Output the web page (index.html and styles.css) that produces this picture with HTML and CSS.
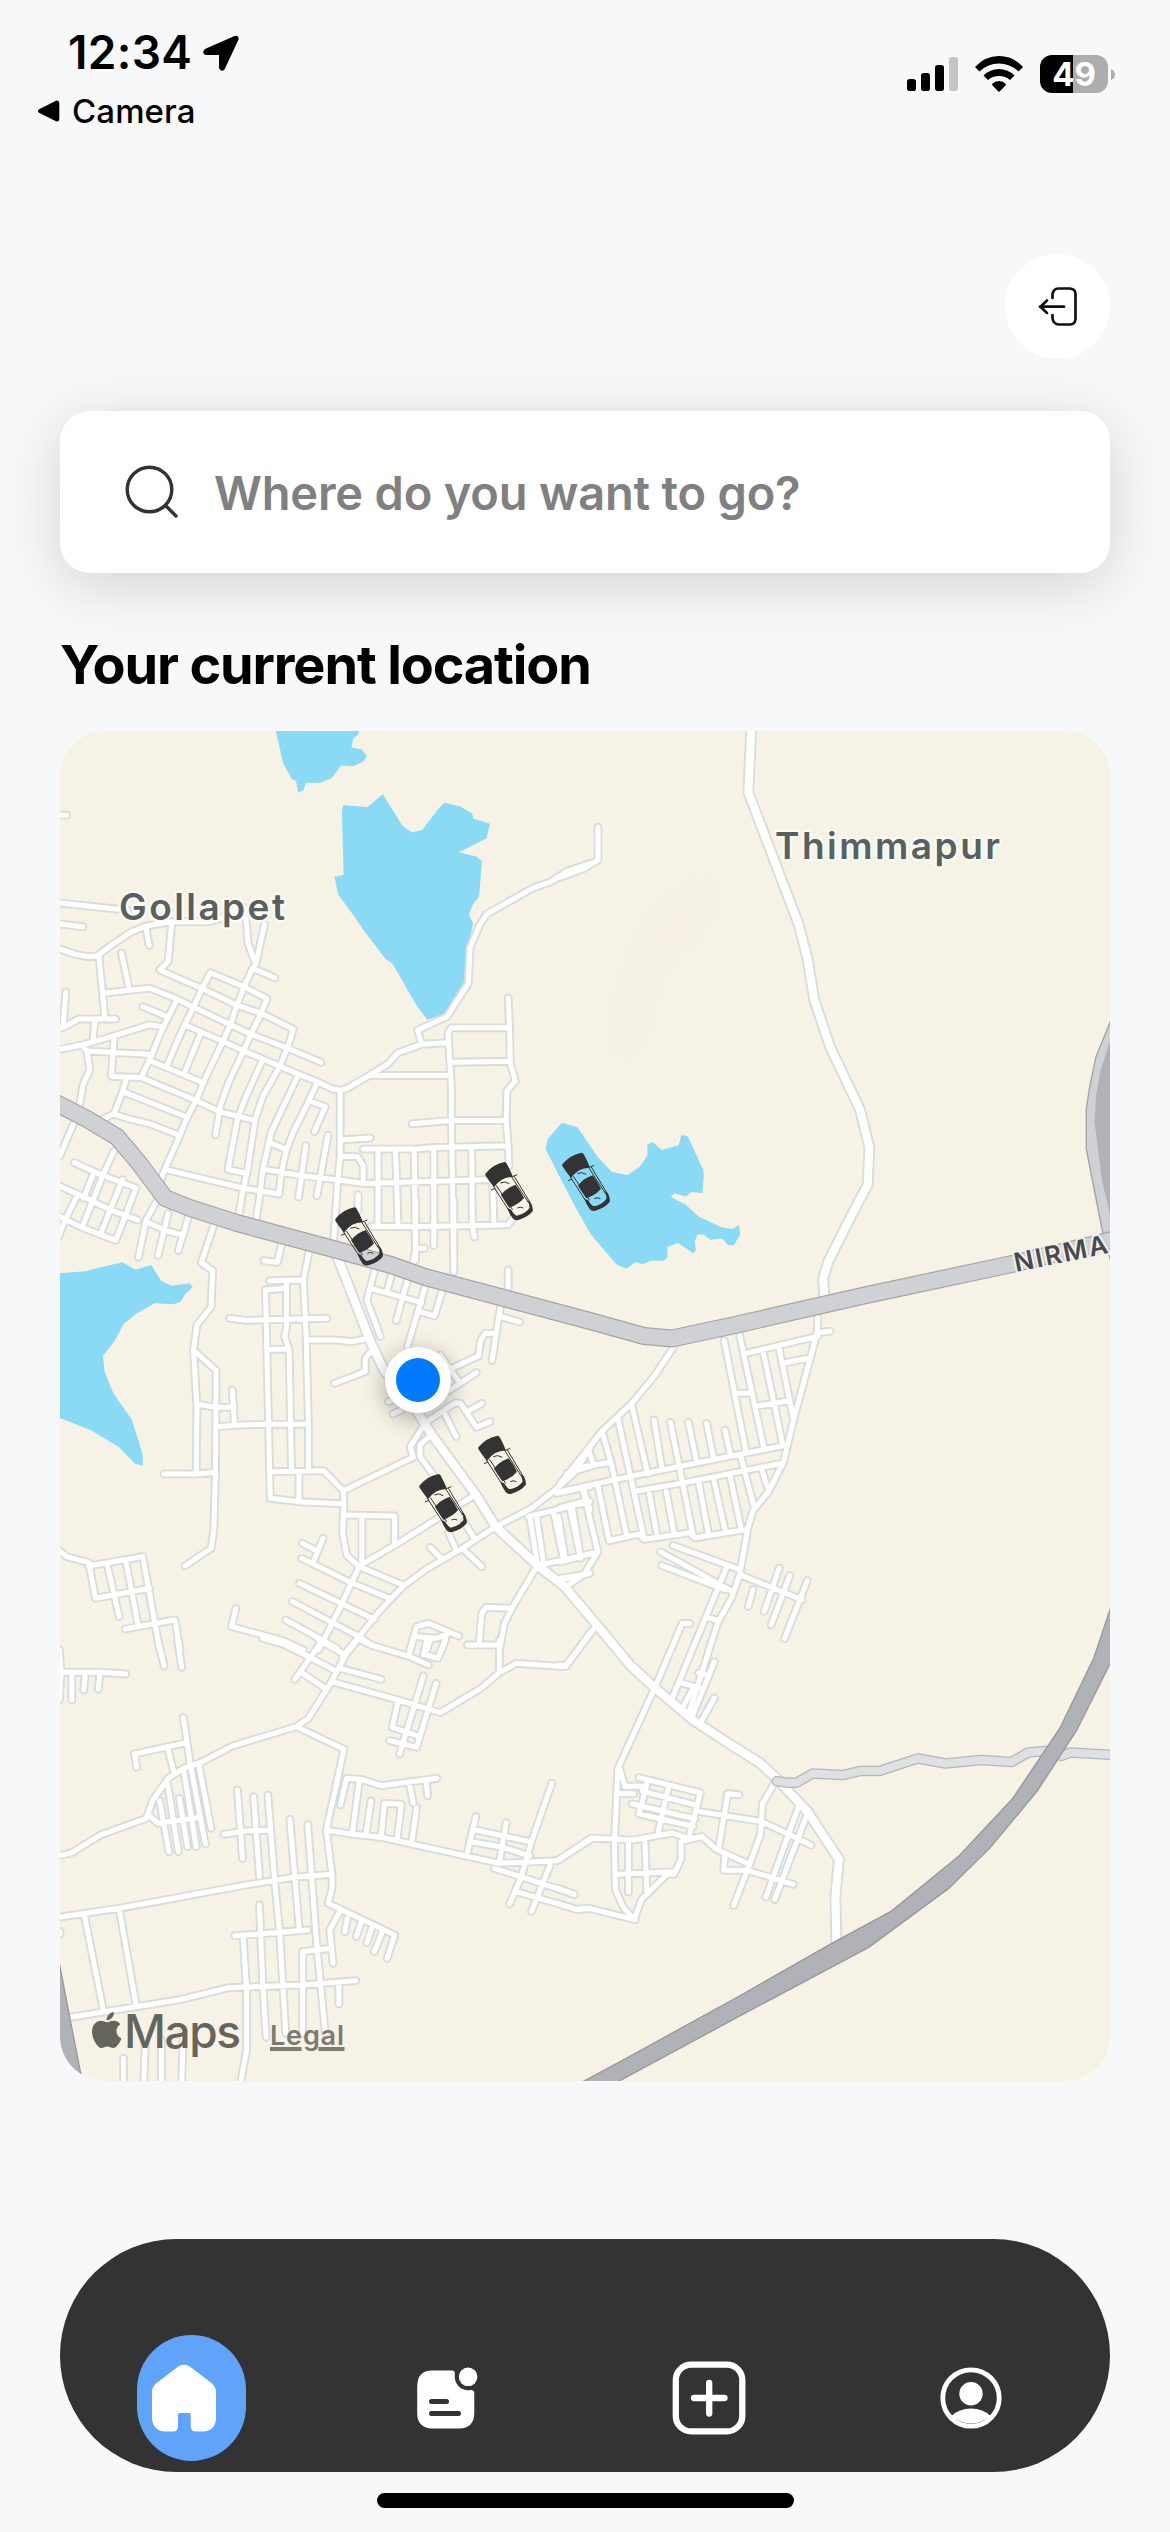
FILE: index.html
```html
<!DOCTYPE html>
<html lang="en">
<head>
<meta charset="utf-8">
<title>Your current location</title>
<link rel="stylesheet" href="styles.css">
</head>
<body>
<header class="status">
  <div class="status-left">
    <div class="clock"><span class="time">12:34</span>
      <svg class="loc" viewBox="0 0 36 36"><path d="M31 1.2Q36 -.5 35.500 4.500L22 33.500Q20.500 36.500 18 35.500Q16 35 16 32V20H3Q0 19.500 .3 17Q.2 15 3 13.500Z"/></svg>
    </div>
    <div class="back"><svg class="tri" viewBox="0 0 22 22"><path d="M1 9.200Q-1 11 1 12.800L18.500 21.500Q21 22 21.300 19V3Q21 0 18.500 .5Z"/></svg><span class="back-label">Camera</span></div>
  </div>
  <div class="status-right">
    <svg class="signal" viewBox="0 0 51 34"><rect y="22" width="9" height="12" rx="2.800"/><rect x="14" y="16" width="9" height="18" rx="2.800"/><rect x="28" y="8" width="9" height="26" rx="2.800"/><rect x="42" width="9" height="34" rx="2.800" fill="#c4c5c7"/></svg>
    <svg class="wifi" viewBox="0 0 48 36"><path d="M0 11Q10 0 24 0T48 11L43.500 15.500Q35 7.500 24 7.500T4.500 15.500ZM8.500 19.500Q15 13 24 13T39.500 19.500L35 24Q30.500 20 24 20T13 24ZM17 28Q20 25 24 25T31 28Q31 29 30 30L24 36 18 30Q17 29 17 28Z"/></svg>
    <div class="battery"><span class="level">49</span></div>
    <svg class="nub" viewBox="0 0 4 11"><path d="M0 0Q4 1.500 4 5.500T0 11Z" fill="#acadaf"/></svg>
  </div>
</header>
<main class="content">
  <div class="topbar">
    <button class="logout" aria-label="Log out"><svg viewBox="0 0 45 45"><path d="M17.500 14V11Q18 4.500 23.500 4.500H35Q40.500 5 40.500 10V35Q40 40.500 35 40.500H23.500Q18 40 17.500 34V31"/><path d="M29 22.700H5M12 16.500L5.500 22.700L12 28.900"/></svg></button>
  </div>
  <div class="search">
    <svg class="glass" viewBox="0 0 54 54"><circle cx="24.500" cy="24.500" r="22.300"/><path d="M40.500 40.500L51 51"/></svg>
    <span class="placeholder">Where do you want to go?</span>
  </div>
  <h1 class="title">Your current location</h1>
  <section class="map">
    <svg viewBox="60 731 1050 1350">
      <defs>
        <g id="streets">
          <path transform="translate(60 730) scale(.338)" d="M-5 252H20M0 512L200 533M0 574L68 582M0 648L50 665 88 671 110 668 150 638 210 598 255 580 330 567H440L475 558 520 530 545 525 552 575 556 630 578 690M605 575L580 690 565 715 545 760 525 810 505 870 480 925 430 1030 405 1090 370 1160 350 1210 310 1300 298 1330M570 705L635 733M255 590L264 638M330 575L320 685 295 710 420 765 525 815 595 838 690 885 675 935 650 995 600 1085 578 1150 555 1300 540 1370 530 1430M115 668L125 770 133 855M182 660L205 768M135 778L205 770 265 764 345 795 395 820 500 870 565 900 670 940 772 983M17 775L10 870M0 882L10 880 55 855H165M103 860L98 915M0 945L65 932 160 905 265 872 300 878M65 932L80 950 270 960M80 950L88 1005 68 1050 58 1110M160 910L152 1025 240 1028 400 1095 475 1130 575 1155M345 800L320 850 300 890 270 965 240 1028M245 818L320 850M270 980L415 1040M445 718L420 765 395 820 370 870 345 925 318 990M445 718L545 760 612 795 595 838 565 900 545 945 500 1040 475 1110 460 1198M375 875L480 920 545 950 650 995 705 1018 760 1040 808 1063 830 1066 850 1060 915 1022 970 988 1000 955 1070 930 1145 925M415 900L370 1010M600 975L550 1085 525 1150 497 1300 553 1312M705 1020L625 1190 600 1300 592 1370 580 1450M760 1045L735 1100 690 1190 670 1242 655 1310 648 1373M740 1098L785 1115 753 1188M625 1222L670 1242M727 1230L706 1382M793 1198L760 1378M310 1300L540 1355 648 1373M605 1300L710 1318 830 1332 900 1342 1110 1335 1280 1330M195 1035L185 1070 160 1135 130 1150M185 1070L375 1145M160 1137L210 1152 265 1165 350 1198M40 1165L0 1260M829 1066V1260L822 1330 810 1510M830 1213L918 1207M830 1262H880L897 1290V1340M915 1022H1145M1070 930L1058 888 1145 848 1208 750 1213 645 1240 580 1262 545 1400 467 1450 450 1500 418 1568 395M1326 793L1330 880 1332 985 1347 1038 1322 1068 1320 1155 1326 1230 1328 1290M1330 881H1158L1148 895 1158 1055V1155L1165 1570M1158 983L1332 980M1042 1165L1155 1155H1318M897 1240H1050L1110 1235 1326 1230M941 1245V1470M993 1245L1000 1470M1048 1245L1052 1568M1106 1240V1525M1218 1240L1220 1470 1226 1500M1280 1335L1284 1465M882 1375V1420M920 1468L1050 1470 1325 1464 1340 1445M42 1280L120 1315 225 1355M160 1245L130 1310 70 1460M100 1310L70 1385M0 1350L85 1388 145 1418 230 1450M225 1355L165 1510M185 1330L120 1490M0 1440L60 1470 165 1510M50 1380L15 1450 -5 1500M285 1395L255 1450 232 1560M255 1455L310 1480 365 1495M320 1430L290 1555M380 1440L350 1540"/>
          <path transform="translate(60 1200) scale(.338 .3333)" d="M455 75L418 188 452 212 447 320 405 375 395 450 405 620 403 818M395 450L462 512 460 810 455 990 447 1045 370 1098M308 822H400L460 817M405 612L460 622H515M510 570L516 672M460 680L550 674 735 672M655 135L643 187 603 182M738 150L720 240 620 242M610 270L668 265M670 245V380L665 410 678 450 685 812M608 270L622 895 707 905 840 912M720 240L728 400 735 672V810M502 355L550 361 790 355M622 448H672M735 420H815L865 425 910 415M920 455L903 475V515L812 550M625 815L780 812 838 872 1045 772 1036 740 1080 670M707 820V905M838 872L840 912 836 1000 848 1065 885 1100 1015 1155M840 945L990 948V1035M893 950V1100M885 1098L1000 1030 1110 960 1220 890M885 1100L855 1165 830 1220 800 1280 765 1350M835 1370L885 1310 940 1240 980 1195 1020 1155 1080 1110 1190 1045 1290 980 1395 925 1465 870 1520 820 1568 745M1095 1042L1130 1078M1190 1045L1248 1100M1228 1018L1195 965M1170 1045L1150 1000M1098 705L1065 735V770L1105 825M930 215L908 300 948 410M920 265L1070 308M980 225L968 275M1028 240L995 362M1080 262L1060 330 1028 440M1130 275L1108 348 1065 335M1165 0V215M1052 0V150L1045 190M1055 145H1078M1326 210V270M1303 320L1278 482M1305 350L1360 366M1285 400H1258L1245 420 1238 468 1160 505M1232 518L1150 572M1125 465L1180 545M1085 665L1170 608 1185 610 1232 682 1272 665M1205 635L1248 610M1140 645L1172 710M972 605L990 598M985 642L1010 630M-5 1050L20 1070 85 1088 105 1195 265 1165M85 1098L245 1070 295 1350M140 1095L175 1250M195 1085L230 1270M193 1287L285 1270 340 1260 355 1350M520 1225L508 1280 660 1322 720 1350M717 1030L755 1050M778 1015L750 1085M715 1075L855 1145 980 1197M708 1150L930 1258M688 1205L885 1310 920 1335M668 1260L820 1345M1205 1335H1300M1240 1335L1248 1240 1260 1222 1335 1225M1410 1100L1340 1220 1315 1270 1300 1350M1035 1350L1055 1280 1090 1270 1180 1308M1055 1310L1110 1315 1145 1305M1085 1350L1095 1320M1130 1350L1140 1315M1470 880L1568 860M1500 820L1568 800M1385 950L1568 905M1390 950L1412 1090M1410 950L1430 1085M1460 935L1490 1080M1510 930L1540 1075M1550 870L1568 930M1420 1095L1568 1062M1480 1140L1568 1120"/>
          <path transform="translate(60 1640) scale(.338 .3333)" d="M0 97H120L195 102M-2 30L3 97 -2 180M35 100V180M75 100L70 150M118 100L113 148M290 0L308 78M348 0L360 82M600 -5L660 12 745 55 815 92M765 0L845 45M880 0L845 45 800 130 735 235 700 260 510 318 415 368 365 385 320 415 275 480 255 535 120 585 35 638 -5 648M770 10L695 118M710 95L785 145M830 85L950 118M890 0L920 15 1035 50 1090 75M805 125L1000 180 1125 218 1245 145 1300 98 1350 70 1495 80 1550 5 1570 -25M1300 98V0M1045 0L1032 45M1085 0L1075 45M1140 0L1118 55 1085 45M1075 108L1005 342M1113 130L1055 322 975 302M1000 185L983 262 1065 290M365 233L385 370 430 612M375 308L220 342 227 382M318 320L335 390M410 370L447 565M365 385L403 620M318 430L350 635M295 483L322 635M353 475L377 620M262 525L290 550 410 533M700 260L840 328 788 570 805 705V745L793 790 990 885 968 955M-5 832L175 805 550 735 690 712 805 703M788 570L860 582 950 592 1040 612 1200 648 1300 670 1470 662 1568 600M830 495L848 415 890 418 950 437 1115 415M885 425L865 580M920 483L905 585M950 590L960 490 1010 493 997 600M1033 425L1045 490M1083 425L1088 468M1055 503L1040 612M525 450L540 655M573 470L590 710M485 583L550 573 620 570M615 465L635 720 650 880 668 1180M680 538L708 868M733 553L760 920 785 1180M517 887L590 882 733 870M590 795L600 1035 610 1192M542 890L552 1050V1230L535 1325M800 925L718 935V1180M825 820L798 870 808 970M850 835L843 875M890 850L877 890M922 865L908 908M952 880L930 935M30 1132L350 1080 500 1043 720 1035 875 1022M825 1030V1092M72 825L128 1110M175 805L225 1095M188 1255V1330M252 1215L248 1330M300 1200V1330M365 1175L360 1330M0 874V882M1230 530L1205 640M1220 568L1390 605M1215 605L1310 622 1390 648M1320 548L1300 668M1455 430L1395 605 1365 710 1330 792M1285 685L1520 762M1450 675L1395 815M1350 755L1530 808 1568 805"/>
          <path transform="translate(560 1300) scale(.3508 .5038)" d="M325 92L270 150 205 205 120 260 75 300 35 335 0 365M-10 382L200 350 645 288M35 335L145 322M80 295L95 325M120 262L145 320 190 468M165 235L240 475M205 210L250 345M268 238L290 332M315 243L380 470M366 243L390 322M418 245L438 315M470 258L485 305M212 380L360 362 625 325M108 368L140 478 225 465 240 475 370 462 385 472 535 455M255 385L275 462M303 380L325 462M395 360L422 460M438 355L470 455M485 350L515 450M515 310L553 410M575 335L590 370M468 80L530 300M512 70L580 290M580 105L635 288M625 98L665 235M535 105L735 72M640 125L712 115M505 185H545M565 210L655 200M735 35L733 65 665 240 638 320 595 380 550 418 535 455 512 545 490 590 450 640 365 825M735 65L770 62M0 412L68 400M65 375L108 500 68 545 15 570M35 412L58 508M-5 430L15 515M0 520L108 500M-5 553L68 545M322 487L512 535M287 500L495 580M290 527L470 575M512 545L690 595M625 532L582 618M655 547L602 645M705 557L640 672M550 575L537 608M475 530L320 790M420 630L445 635M345 760L400 770M370 642H348L270 770 165 930 155 1080 158 1170 180 1205 212 1230 232 1190 305 1140H325L345 1110V1075L405 1065 445 1090 540 1120M440 718L375 830M395 740L425 745M380 770L345 815M440 790L400 840M-5 725H18L100 650M170 930L185 965H235M165 980H210M225 948L400 978 370 1060M250 955L225 1020 380 1045M310 965L280 1055M205 1000L385 1030M235 975L390 1003M395 1015L575 1035 650 1060 715 1082M510 982L478 980 452 1090M0 1110L88 1068 210 1072 320 1058 370 1070 405 1065M195 1075V1175M242 1075L248 1180M165 1140L320 1135M470 1100L467 1132H510L535 1132 665 1160M615 955L577 1000 572 1060 535 1130 495 1202M680 1005L587 1185M705 1020L612 1190M-5 1168L40 1180M-5 1198L48 1210 85 1208 215 1230"/>
          <path d="M558 878L567 875 583 869 598 860V827"/>
        </g>
        <g id="avenues">
          <path transform="translate(560 730) scale(.3508 .4464)" d="M545 -10V0L537 140 680 435 705 510 725 605 770 710 855 850 882 935 877 1020 852 1055 765 1190 750 1230 755 1285"/>
          <path d="M337 1256L371 1343 384 1370 418 1413 432 1435 476 1495 496 1527 537 1565 564 1586 597 1625 630 1665 655 1688 693 1720 728 1743 760 1763 777 1779 807 1811"/>
          <path transform="translate(560 1300) scale(.3508 .5038)" d="M705 1015L795 1110 785 1185 788 1275"/>
        </g>
        <path id="highway" d="M50 1100L60 1105 87 1119 117 1137 139 1163 165 1198 190 1208 237 1223 337 1250 391 1265 425 1277 590 1321 644 1336 672 1338.500 735 1325 862 1296 1012 1264 1120 1238"/>
        <path id="lane" transform="translate(560 1300) scale(.3508 .5038)" d="M618 955L645 958H675L720 940 805 943 855 935H910L1020 910 1100 920 1200 913 1288 917 1335 898 1385 895 1430 905 1455 898 1575 903"/>
        <g id="car">
          <path d="M46 297Q70 268 104 262Q109 262 112 270Q121 286 129 307Q95 306 72 338Q56 318 46 302Z"/>
          <path d="M93 361Q108 340 137 330Q151 348 162 370Q148 388 118 399Q106 382 93 361Z"/>
          <path d="M112 400Q118 418 128 431Q135 439 145 436Q175 427 188 410Q191 400 182 384L172 376Q180 391 178 401Q164 419 140 423Q132 420 124 405Z"/>
          <path class="trim" d="M70 335L122 415M79 333L128 405M124 305L176 385M133 305L184 390M63 346L76 341M127 306L142 300M91 325Q104 318 118 327M142 400Q150 395 160 400"/>
        </g>
        <filter id="soft" x="-60%" y="-60%" width="220%" height="220%"><feGaussianBlur stdDeviation="12"/></filter>
      </defs>
      <rect class="land" x="60" y="731" width="1050" height="1350"/>
      <g class="shade" filter="url(#soft)"><ellipse cx="675" cy="925" rx="18" ry="55" transform="rotate(42 675 925)"/><ellipse cx="636" cy="1000" rx="12" ry="60" transform="rotate(14 636 1000)"/></g>
      <g class="water">
        <path transform="translate(60 730) scale(.338)" d="M638 0H885L883 12 868 25 862 52 892 57 908 77 898 93 868 107 832 105 803 143 768 157 728 156 720 178 705 186 698 150 686 146 660 98ZM838 223L910 228 955 190 1013 283 1042 303 1072 295 1120 232 1138 215 1185 226 1220 248 1222 262 1272 277 1262 320 1180 362 1232 374 1248 388 1240 493 1222 515 1210 545 1222 572 1213 615 1202 640 1196 745 1138 838 1103 852 1087 857 1055 815 985 693 962 676 895 588 870 550 823 487 812 435 839 428 834 240Z"/>
        <path transform="translate(560 730) scale(.3508 .4464)" d="M5 880L50 890 108 957 148 990 193 997 228 978 249 953V928L264 923 290 941 338 930 346 907 364 910 408 985 410 997 406 1038 375 1035 358 1045 326 1038 316 1046 358 1063 395 1090 460 1114 492 1118 510 1109 514 1130 495 1155 478 1153 462 1139 428 1142 410 1130H392L384 1145 387 1166 380 1172 336 1149 306 1158V1182L295 1189H258L236 1197 215 1192 190 1207 162 1198 88 1130 45 1070 5 1010 -41 939 -35 916Z"/>
        <path transform="translate(60 1200) scale(.338 .3333)" d="M0 220L75 214 140 197 185 187 223 209 270 195 300 243 330 257 383 250 393 261 370 282 357 305 335 313 280 310 225 342 188 372 162 422 127 468 132 515 158 580 213 660 245 765V797L222 791 175 742 90 690 0 654Z"/>
      </g>
      <g class="lines">
        <use href="#streets" class="street-edge"/><use href="#avenues" class="avenue-edge"/>
        <use href="#streets" class="street"/><use href="#avenues" class="avenue"/>
        <use href="#lane" class="lane-edge"/><use href="#lane" class="lane"/>
      </g>
      <g transform="translate(560 730) scale(.3508 .4464)">
        <path class="loop" d="M1580 632L1528 732 1510 800 1500 850V938L1548 1130 1585 1230Z"/>
        <path class="loop-core" d="M1580 668L1540 765 1528 820 1524 880 1545 1010 1568 1085 1580 1120Z"/>
      </g>
      <g class="lines"><use href="#highway" class="highway-edge"/><use href="#highway" class="highway"/></g>
      <path class="ring" transform="translate(560 1300) scale(.3508 .5038)" d="M40 1561L190 1505 510 1382 780 1275 945 1213 1138 1103 1290 990 1425 850 1522 710 1580 590V705L1472 855 1360 975 1225 1088 1108 1168 880 1285 510 1422 140 1561Z"/>
      <path class="ring" d="M55 1942L60 1967 70 2019 83 2085H50Z"/>
      <g class="place">
        <text x="119" y="920" textLength="166" font-size="37">Gollapet</text>
        <text x="775" y="859" textLength="225" font-size="37">Thimmapur</text>
      </g>
      <text class="road-name" transform="translate(1016 1272) rotate(-11.500)" textLength="95">NIRMA</text>
      <g class="cars" transform="translate(320 1120) scale(.3333)">
        <use href="#car"/><use href="#car" x="450" y="-136"/><use href="#car" x="681" y="-164"/><use href="#car" x="429" y="685"/><use href="#car" x="252" y="800"/>
      </g>
      <circle cx="418" cy="1386" r="33" fill="#000" opacity=".32" filter="url(#soft)"/>
      <circle cx="418" cy="1380" r="33" fill="#fff"/><circle cx="418" cy="1380" r="22" fill="#007aff"/>
      <g class="credit">
        <path transform="translate(88.700 2012) scale(1.500)" d="M12.152 6.896c-.948 0-2.415-1.078-3.960-1.040-2.040.027-3.910 1.183-4.961 3.014-2.117 3.675-.546 9.103 1.519 12.090 1.013 1.454 2.208 3.090 3.792 3.039 1.520-.065 2.090-.987 3.935-.987 1.831 0 2.350.987 3.960.948 1.637-.026 2.676-1.480 3.676-2.948 1.156-1.688 1.636-3.325 1.662-3.415-.039-.013-3.182-1.221-3.220-4.857-.026-3.040 2.480-4.494 2.597-4.559-1.429-2.090-3.623-2.324-4.390-2.376-2-.156-3.675 1.090-4.610 1.090zM15.530 3.830c.843-1.012 1.400-2.427 1.245-3.830-1.207.052-2.662.805-3.532 1.818-.780.896-1.454 2.338-1.273 3.714 1.338.104 2.715-.688 3.559-1.701"/>
        <text class="maps" x="124" y="2048" textLength="117">Maps</text>
      </g>
      <g class="legal"><text x="270" y="2045" textLength="74">Legal</text><path d="M270 2047H301.500V2051H270ZM318.500 2047H344.500V2051H318.500Z"/></g>
    </svg>
  </section>
  <nav class="tabs">
    <a class="tab"><span class="pill"><svg viewBox="0 0 72 72"><path d="M29.500 5Q36 0 42.500 5L64 21.500Q68 25 68 30V57Q67 69 55 69.500H48Q42.700 69.500 42.700 64V53Q42.700 51 41 51H32Q30 51 30 53V64Q30 69.500 25 69.500H17Q5.500 69 4 57V30Q4 25 8 21.500Z"/></svg></span></a>
    <a class="tab"><svg viewBox="0 0 72 72"><path d="M22 8.500H42Q45.500 8.500 44.800 13A13.500 13.500 0 0 0 59 28.200Q64.300 27.500 64.300 31V51Q64 66.500 49 66.500H22Q7.200 66 7.200 51V24Q7.500 8.500 22 8.500Z"/><circle cx="58.100" cy="14.800" r="9.300"/><path class="ink" d="M21.500 39.500H36.500M21.500 51.500H48.500"/></svg></a>
    <a class="tab"><svg viewBox="0 0 72 72"><rect class="wire" x="2.800" y="2.600" width="66.500" height="66.800" rx="15.500"/><path class="wire" d="M21 36H51.500M36.200 21V51.500"/></svg></a>
    <a class="tab"><svg viewBox="0 0 72 72"><circle class="wire thin" cx="36" cy="36" r="28.200"/><circle cx="36" cy="31.800" r="11.700"/><path d="M16.500 54Q24 46.500 36 46.500T55.500 54A29 29 0 0 1 16.500 54Z"/></svg></a>
  </nav>
</main>
<div class="home-bar"></div>
</body>
</html>
```
FILE: styles.css
```css
* { box-sizing: border-box; }
body {
  margin: 0;
  width: 1170px;
  height: 2532px;
  overflow: hidden;
  background: #f7f8fa;
  color: #000;
  font-family: Inter, "Liberation Sans", sans-serif;
}
svg { display: block; }

/* status bar */
.status { display: flex; justify-content: space-between; height: 140px; padding: 22px 55px 0 38px; }
.clock { display: flex; align-items: center; gap: 12px; height: 61px; padding-left: 30px; }
.time { width: 123px; font-size: 46px; font-weight: 600; letter-spacing: 0.3px; line-height: 61px; }
.loc { width: 36px; height: 36px; }
.back { display: flex; align-items: center; gap: 12px; height: 56px; }
.tri { width: 22px; height: 22px; }
.back-label { font-size: 33px; font-weight: 500; letter-spacing: 0.1px; }
.status-right { display: flex; align-items: center; height: 38px; margin-top: 33px; }
.signal { width: 51px; height: 34px; }
.wifi { width: 48px; height: 36px; margin: 0 17px; }
.battery {
  width: 68px; height: 38px; border-radius: 12px;
  background: linear-gradient(90deg, #000 33px, #acadaf 33px);
  display: flex; align-items: center; justify-content: center;
}
.level { color: #fff; font-size: 33px; font-weight: 700; line-height: 38px; }
.nub { width: 4px; height: 11px; margin-left: 3px; }

.content { padding: 0 60px; }
.topbar { display: flex; justify-content: flex-end; padding-top: 114px; }
.logout { display: flex; align-items: center; justify-content: center; width: 105px; height: 105px; padding: 0; border: 0; border-radius: 50%; background: #fff; }
.logout svg { width: 45px; height: 45px; fill: none; stroke: #111; stroke-width: 2.7; stroke-linecap: round; stroke-linejoin: round; }

.search {
  display: flex; align-items: center; gap: 35px;
  height: 162px; margin-top: 52px; padding: 0 65px; border-radius: 30px;
  background: #fff; box-shadow: 0 12px 60px rgba(0, 0, 0, .15);
}
.glass { width: 54px; height: 54px; fill: none; stroke: #333; stroke-width: 3.4; stroke-linecap: round; }
.placeholder { font-size: 47px; font-weight: 600; color: #808080; white-space: nowrap; letter-spacing: -0.2px; }

.title { margin: 52px 0 26px; font-size: 54px; font-weight: 700; line-height: 80px; letter-spacing: -1.13px; white-space: nowrap; }

/* map */
.map { width: 1050px; height: 1350px; border-radius: 45px; overflow: hidden; }
.map svg { width: 1050px; height: 1350px; }
.land { fill: #f6f2e5; }
.shade { fill: #eee8da; opacity: .25; }
.water { fill: #8bdaf5; }
.lines { fill: none; stroke-linecap: round; stroke-linejoin: round; }
.lines use, #streets path, #avenues path, #lane, .loop, .loop-core, .ring { vector-effect: non-scaling-stroke; }
.street-edge { stroke: #dadcdb; stroke-width: 8.8px; }
.street { stroke: #fff; stroke-width: 5px; }
.avenue-edge { stroke: #dadcdb; stroke-width: 11.8px; }
.avenue { stroke: #fff; stroke-width: 8px; }
.lane-edge { stroke: #b5b6bb; stroke-width: 10.5px; }
.lane { stroke: #dfe0e4; stroke-width: 8px; }
.highway-edge { stroke: #a5a5a8; stroke-width: 18px; }
.highway { stroke: #d0d1d5; stroke-width: 15.6px; }
.loop { fill: #d0d1d5; stroke: #a5a5a8; stroke-width: 1.4px; }
.loop-core { fill: #b1b2b8; }
.ring { fill: #b1b2b8; stroke: #98999d; stroke-width: 1.4px; }
.place { fill: #5a5f5f; font-weight: 600; stroke: #f9faf5; stroke-width: 5px; paint-order: stroke; stroke-linejoin: round; }
.road-name { fill: #4a4a4d; font-size: 26px; font-weight: 600; stroke: #f1f1f1; stroke-width: 4px; paint-order: stroke; stroke-linejoin: round; }
.cars { fill: #333; }
.trim { fill: none; stroke: #333; stroke-width: 3px; }
.credit { fill: #65655e; }
.maps { font-size: 46px; font-weight: 500; }
.legal { fill: #7b7b73; }
.legal text { font-size: 27px; font-weight: 600; }

/* bottom navigation */
.tabs { display: grid; grid-template-columns: repeat(4, 1fr); height: 233px; margin-top: 158px; padding-top: 96px; border-radius: 117px; background: #333; }
.tab { display: flex; justify-content: center; align-items: center; height: 126px; padding-right: 15px; }
.tab svg { flex: none; width: 72px; height: 72px; fill: #fff; overflow: visible; }
.pill { display: flex; align-items: center; width: 109px; height: 126px; margin-right: -15px; padding-left: 11px; border-radius: 55px; background: #60a3fa; }
.tab .wire { fill: none; stroke: #fff; stroke-width: 6.3; stroke-linecap: round; }
.tab .thin { stroke-width: 4.8; }
.ink { fill: none; stroke: #333; stroke-width: 5; stroke-linecap: round; }
.home-bar { width: 417px; height: 15px; margin: 21px auto 0; border-radius: 8px; background: #000; }
```
